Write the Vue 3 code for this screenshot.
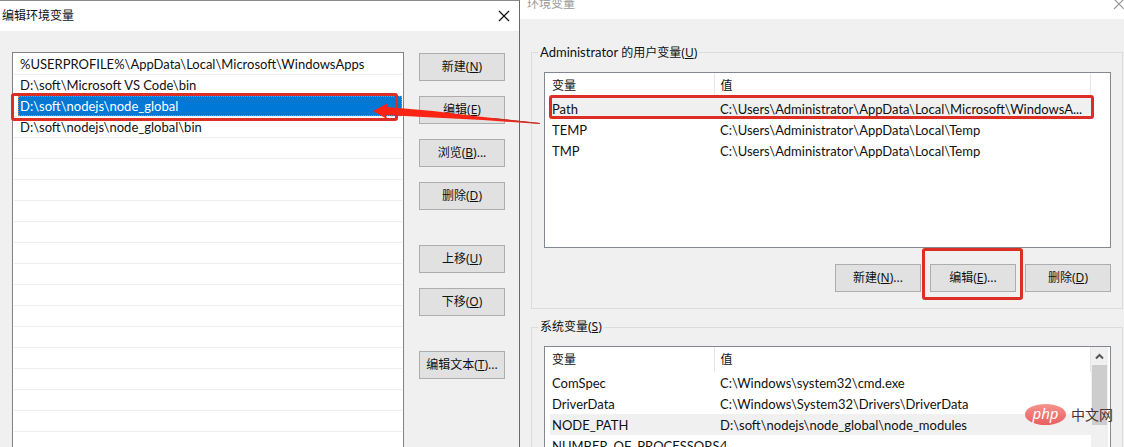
<template>
  <div class="desktop">
    <!-- 编辑环境变量 -->
    <section class="dialog edit-dialog">
      <header class="title-bar">
        <h1 class="title">编辑环境变量</h1>
        <button class="close-btn" aria-label="关闭">
          <svg width="12" height="12" viewBox="0 0 12 12">
            <path d="M1 1L11 11M11 1L1 11" fill="none" stroke="currentColor" stroke-width="1.2" />
          </svg>
        </button>
      </header>

      <div class="edit-body">
        <ul class="path-list">
          <li
            v-for="(path, index) in paths"
            :key="index"
            class="path-item"
            :class="{ selected: index === selectedPath }">
            <span class="path-text">{{ path }}</span>
            <span v-if="index === selectedPath" class="mark path-mark"></span>
          </li>
        </ul>

        <div class="side-buttons">
          <div v-for="(group, index) in sideButtons" :key="index" class="side-group">
            <button v-for="btn in group" :key="btn.key" class="btn">
              {{ btn.label }}(<u>{{ btn.key }}</u>){{ btn.more }}
            </button>
          </div>
        </div>
      </div>

      <!-- 箭头 -->
      <svg class="arrow" width="168" height="30" viewBox="0 0 168 30">
        <path d="M0 11L15 3L14 7L60 11L110 17L167 23V24L110 20L60 17.500L13 15L14 19Z" fill="#fb2314" />
        <path d="M120 18.500L167 23.500" stroke="#b9362e" stroke-width="1" />
      </svg>
    </section>

    <!-- 环境变量 -->
    <section class="dialog env-dialog">
      <header class="title-bar inactive">
        <h2 class="title">环境变量</h2>
        <button class="close-btn" aria-label="关闭">
          <svg width="12" height="12" viewBox="0 0 12 12">
            <path d="M1 1L11 11M11 1L1 11" fill="none" stroke="currentColor" stroke-width="1.2" />
          </svg>
        </button>
      </header>

      <div class="env-body">
        <fieldset class="group">
          <legend><span class="latin">Administrator</span> 的用户变量(<u>U</u>)</legend>
          <div class="var-box user-box">
            <table class="var-table">
              <thead>
                <tr><th class="col-name">变量</th><th>值</th></tr>
              </thead>
              <tbody>
                <tr v-for="(item, index) in userVars" :key="item.name" :class="{ current: index === 0 }">
                  <td>{{ item.name }}<span v-if="index === 0" class="mark row-mark"></span></td>
                  <td>{{ item.value }}</td>
                </tr>
              </tbody>
            </table>
          </div>
          <div class="actions">
            <button class="btn">新建(<u>N</u>)...</button>
            <button class="btn marked">编辑(<u>E</u>)...<span class="mark btn-mark"></span></button>
            <button class="btn">删除(<u>D</u>)</button>
          </div>
        </fieldset>

        <fieldset class="group">
          <legend>系统变量(<u>S</u>)</legend>
          <div class="var-box system-box">
            <table class="var-table">
              <thead>
                <tr><th class="col-name">变量</th><th>值</th></tr>
              </thead>
              <tbody>
                <tr v-for="item in systemVars" :key="item.name" :class="{ current: item.name === 'NODE_PATH' }">
                  <td>{{ item.name }}</td>
                  <td>{{ item.value }}</td>
                </tr>
              </tbody>
            </table>
            <div class="scrollbar">
              <button class="scroll-up" aria-label="向上滚动">
                <svg width="9" height="7" viewBox="0 0 9 7">
                  <path d="M1 5.500L4.500 2L8 5.500" fill="none" stroke="#555" stroke-width="2" />
                </svg>
              </button>
              <div class="scroll-thumb"></div>
            </div>
          </div>
        </fieldset>
      </div>
    </section>

    <!-- 水印 -->
    <div class="watermark">
      <span class="php">php</span>
      <span class="site">中文网</span>
    </div>
  </div>
</template>

<script setup>
import { ref } from 'vue'

// 路径列表，空行补满列表框
const paths = ref([
  '%USERPROFILE%\\AppData\\Local\\Microsoft\\WindowsApps',
  'D:\\soft\\Microsoft VS Code\\bin',
  'D:\\soft\\nodejs\\node_global',
  'D:\\soft\\nodejs\\node_global\\bin',
  ...Array(16).fill('')
])
const selectedPath = ref(2)

const sideButtons = [
  [
    { label: '新建', key: 'N' },
    { label: '编辑', key: 'E' },
    { label: '浏览', key: 'B', more: '...' },
    { label: '删除', key: 'D' }
  ],
  [
    { label: '上移', key: 'U' },
    { label: '下移', key: 'O' }
  ],
  [{ label: '编辑文本', key: 'T', more: '...' }]
]

const userVars = ref([
  { name: 'Path', value: 'C:\\Users\\Administrator\\AppData\\Local\\Microsoft\\WindowsA...' },
  { name: 'TEMP', value: 'C:\\Users\\Administrator\\AppData\\Local\\Temp' },
  { name: 'TMP', value: 'C:\\Users\\Administrator\\AppData\\Local\\Temp' }
])

const systemVars = ref([
  { name: 'ComSpec', value: 'C:\\Windows\\system32\\cmd.exe' },
  { name: 'DriverData', value: 'C:\\Windows\\System32\\Drivers\\DriverData' },
  { name: 'NODE_PATH', value: 'D:\\soft\\nodejs\\node_global\\node_modules' },
  { name: 'NUMBER_OF_PROCESSORS', value: '4' }
])
</script>

<style>
body {
  margin: 0;
}
</style>

<style scoped>
.desktop {
  position: relative;
  display: flex;
  height: 100vh;
  overflow: hidden;
  background: #f0f0f0;
  color: #111;
  font-family: "Noto Sans", "Noto Sans CJK SC", sans-serif;
  font-size: 12px;
  line-height: 16px;
}

.desktop * {
  box-sizing: border-box;
}

.dialog {
  display: flex;
  flex-direction: column;
  min-width: 0;
}

.edit-dialog {
  position: relative;
  flex: 519 1 0;
  border-top: 1px solid #8a8a8a;
  border-right: 1px solid #6a6a6a;
}

.env-dialog {
  flex: 604 1 0;
}

.title-bar {
  display: flex;
  flex-shrink: 0;
  justify-content: space-between;
  align-items: center;
  height: 30px;
  padding: 0 7px 0 2px;
  background: #fff;
}

.title-bar.inactive {
  align-items: flex-start;
  height: 19px;
  padding: 0 0 0 7px;
  color: #999;
}

.title {
  margin: 0;
  font-size: 12px;
  font-weight: 400;
}

.inactive .title,
.inactive .close-btn {
  margin-top: -4px;
}

.inactive .close-btn {
  margin-right: -3px;
}

.close-btn {
  display: flex;
  padding: 2px;
  border: none;
  background: none;
  color: inherit;
}

.edit-body {
  display: flex;
  flex: 1;
  gap: 15px;
  min-height: 0;
  padding: 21px 14px 0 12px;
}

.path-list {
  flex: 1;
  min-width: 0;
  margin: 0;
  padding: 1px 1px 0;
  border: 1px solid #828282;
  border-bottom: none;
  background: #fff;
  list-style: none;
  font-family: Lato, "Noto Sans CJK SC", sans-serif;
  font-size: 13px;
}

.path-item {
  position: relative;
  height: 21px;
  border-bottom: 1px solid #eee;
}

.path-text {
  display: block;
  height: 20px;
  margin-left: 4px;
  padding-left: 2px;
  line-height: 20px;
  white-space: nowrap;
}

.selected .path-text {
  outline: 1px dotted #c98b4a;
  outline-offset: -1px;
  background: #0078d7;
  color: #fff;
}

.mark {
  position: absolute;
  border: 3px solid #dc2e25;
  border-radius: 3px;
  pointer-events: none;
}

.path-mark {
  inset: -3px 4px -5px -3px;
}

.side-buttons {
  display: flex;
  flex-direction: column;
  gap: 35px;
  width: 86px;
  padding-top: 1px;
}

.side-group {
  display: flex;
  flex-direction: column;
  gap: 15px;
}

.btn {
  width: 86px;
  height: 28px;
  padding: 0;
  border: 1px solid #adadad;
  background: #e1e1e1;
  color: #111;
  font-family: inherit;
  font-size: 12px;
  line-height: 16px;
  white-space: nowrap;
}

.arrow {
  position: absolute;
  top: 99px;
  right: -22px;
  z-index: 1;
}

.env-body {
  display: flex;
  flex: 1;
  flex-direction: column;
  gap: 10px;
  padding: 25px 1px 0 11px;
}

.group {
  min-width: 0;
  margin: 0;
  padding: 11px 11px 16px 12px;
  border: 1px solid #dcdcdc;
}

.group legend {
  margin-left: -6px;
  padding: 0 2px;
}

.latin {
  font-family: Lato, "Noto Sans CJK SC", sans-serif;
  font-size: 13px;
}

.var-box {
  display: flex;
  border: 1px solid #828790;
  background: #fff;
}

.user-box {
  height: 176px;
  padding: 0 19px 0 5px;
}

.system-box {
  padding: 0 2px 0 5px;
}

.var-table {
  flex: 1;
  width: 100%;
  border-collapse: collapse;
  table-layout: fixed;
  align-self: flex-start;
}

.var-table th {
  height: 25px;
  padding: 0 6px 0 6px;
  border-right: 1px solid #e5e5e5;
  font-weight: 400;
  text-align: left;
}

.var-table .col-name {
  width: 164px;
  padding-left: 2px;
}

.var-table tbody tr {
  position: relative;
}

.var-table td {
  height: 21px;
  padding: 0 0 0 6px;
  font-family: Lato, "Noto Sans CJK SC", sans-serif;
  font-size: 13px;
  white-space: nowrap;
}

.var-table td:first-child {
  padding-left: 2px;
}

.current {
  background: #f0f0f0;
}

.row-mark {
  inset: -3px -3px 0 -1px;
}

.actions {
  display: flex;
  justify-content: flex-end;
  gap: 9px;
  margin-top: 16px;
}

.marked {
  position: relative;
}

.btn-mark {
  inset: -17px -8px -9px -9px;
}

.scrollbar {
  display: flex;
  flex-direction: column;
  width: 17px;
  background: #f0f0f0;
}

.scroll-up {
  display: flex;
  align-items: center;
  justify-content: center;
  height: 18px;
  padding: 0;
  border: none;
  background: none;
}

.scroll-thumb {
  height: 60px;
  margin: 0 1px;
  background: #cdcdcd;
}

.watermark {
  position: absolute;
  right: 11px;
  bottom: 22px;
  display: flex;
  align-items: center;
  gap: 5px;
}

.php {
  width: 41px;
  height: 21px;
  border-radius: 50%;
  background: linear-gradient(#f5938d, #e85f60);
  color: #fff;
  font-size: 15px;
  font-style: italic;
  line-height: 18px;
  text-align: center;
}

.site {
  color: #4a3434;
  font-size: 14px;
}
</style>
